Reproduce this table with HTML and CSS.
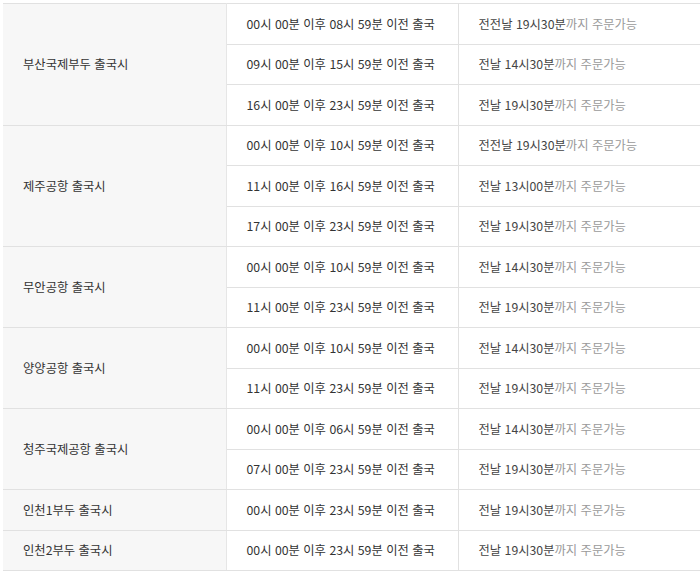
FILE: index.html
```html
<!DOCTYPE html>
<html lang="ko">
<head>
<meta charset="utf-8">
<link rel="stylesheet" href="styles.css">
</head>
<body>
<table class="sched">
  <colgroup><col class="c-place"><col class="c-time"><col class="c-order"></colgroup>
  <tbody>
    <tr><th rowspan="3">부산국제부두 출국시</th><td>00시 00분 이후 08시 59분 이전 출국</td><td class="ord"><b>전전날 19시30분</b>까지 주문가능</td></tr>
    <tr><td>09시 00분 이후 15시 59분 이전 출국</td><td class="ord"><b>전날 14시30분</b>까지 주문가능</td></tr>
    <tr><td>16시 00분 이후 23시 59분 이전 출국</td><td class="ord"><b>전날 19시30분</b>까지 주문가능</td></tr>

    <tr><th rowspan="3">제주공항 출국시</th><td>00시 00분 이후 10시 59분 이전 출국</td><td class="ord"><b>전전날 19시30분</b>까지 주문가능</td></tr>
    <tr><td>11시 00분 이후 16시 59분 이전 출국</td><td class="ord"><b>전날 13시00분</b>까지 주문가능</td></tr>
    <tr><td>17시 00분 이후 23시 59분 이전 출국</td><td class="ord"><b>전날 19시30분</b>까지 주문가능</td></tr>

    <tr><th rowspan="2">무안공항 출국시</th><td>00시 00분 이후 10시 59분 이전 출국</td><td class="ord"><b>전날 14시30분</b>까지 주문가능</td></tr>
    <tr><td>11시 00분 이후 23시 59분 이전 출국</td><td class="ord"><b>전날 19시30분</b>까지 주문가능</td></tr>

    <tr><th rowspan="2">양양공항 출국시</th><td>00시 00분 이후 10시 59분 이전 출국</td><td class="ord"><b>전날 14시30분</b>까지 주문가능</td></tr>
    <tr><td>11시 00분 이후 23시 59분 이전 출국</td><td class="ord"><b>전날 19시30분</b>까지 주문가능</td></tr>

    <tr><th rowspan="2">청주국제공항 출국시</th><td>00시 00분 이후 06시 59분 이전 출국</td><td class="ord"><b>전날 14시30분</b>까지 주문가능</td></tr>
    <tr><td>07시 00분 이후 23시 59분 이전 출국</td><td class="ord"><b>전날 19시30분</b>까지 주문가능</td></tr>

    <tr><th>인천1부두 출국시</th><td>00시 00분 이후 23시 59분 이전 출국</td><td class="ord"><b>전날 19시30분</b>까지 주문가능</td></tr>
    <tr><th>인천2부두 출국시</th><td>00시 00분 이후 23시 59분 이전 출국</td><td class="ord"><b>전날 19시30분</b>까지 주문가능</td></tr>
  </tbody>
</table>
</body>
</html>
```

FILE: styles.css
```css
html, body {
  margin: 0;
  padding: 0;
  overflow: hidden;
  background: #fff;
}

body {
  font-family: "Noto Sans CJK KR", "Noto Sans", sans-serif;
  font-size: 12.3px;
  color: #333;
}

.sched {
  border-collapse: collapse;
  table-layout: fixed;
  width: 697px;
  margin: 3px 0 0 3px;
  border-top: 1px solid #dcdcdc;
  border-bottom: 1px solid #dcdcdc;
}

.c-place { width: 223px; }
.c-time { width: 232px; }
.c-order { width: 242px; }

.sched tr { height: 40.5px; }

.sched th,
.sched td {
  padding: 0 20px;
  text-align: left;
  vertical-align: middle;
  border: 1px solid #e1e1e1;
  white-space: nowrap;
  line-height: 16px;
}

.sched th {
  font-weight: normal;
  background: #f7f7f7;
  color: #333;
  border-left: none;
  border-right: 1px solid #e6e6e6;
}

.sched td { color: #333; }

.sched .ord {
  color: #9a9a9a;
  border-right: none;
}
.sched .ord b { font-weight: normal; color: #444; }
```
